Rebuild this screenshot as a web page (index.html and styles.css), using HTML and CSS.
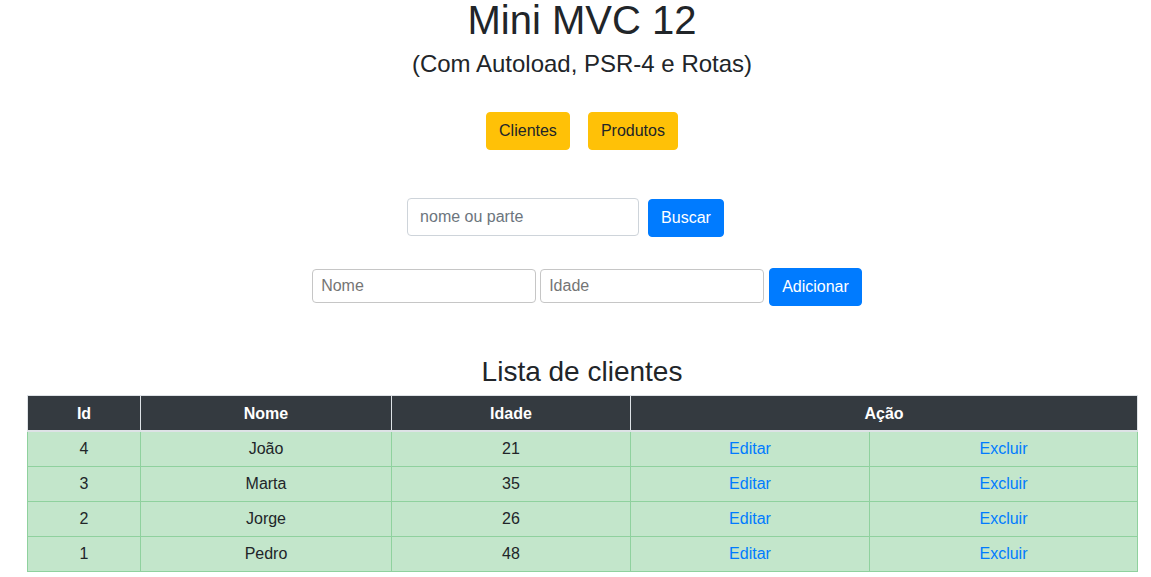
FILE: index.html
```html
<!DOCTYPE html>
<html lang="pt-BR">
<head>
<meta charset="utf-8">
<title>Mini MVC 12</title>
<link rel="stylesheet" href="styles.css">
</head>
<body>
<div class="page">
  <h1 class="title">Mini MVC 12</h1>
  <h4 class="subtitle">(Com Autoload, PSR-4 e Rotas)</h4>
  <nav class="nav">
    <a class="btn btn-warning" href="#">Clientes</a>
    <a class="btn btn-warning" href="#">Produtos</a>
  </nav>
  <form class="search-row">
    <input class="form-control search-input" type="text" placeholder="nome ou parte">
    <button class="btn btn-primary" type="button">Buscar</button>
  </form>
  <form class="add-row">
    <input class="plain-input" type="text" placeholder="Nome">
    <input class="plain-input" type="text" placeholder="Idade">
    <button class="btn btn-primary btn-add" type="button">Adicionar</button>
  </form>
  <h3 class="list-title">Lista de clientes</h3>
  <table class="table">
    <colgroup>
      <col class="c-id"><col class="c-nome"><col class="c-idade"><col class="c-edit"><col class="c-del">
    </colgroup>
    <thead>
      <tr><th>Id</th><th>Nome</th><th>Idade</th><th colspan="2">Ação</th></tr>
    </thead>
    <tbody>
      <tr><td>4</td><td>João</td><td>21</td><td><a href="#">Editar</a></td><td><a href="#">Excluir</a></td></tr>
      <tr><td>3</td><td>Marta</td><td>35</td><td><a href="#">Editar</a></td><td><a href="#">Excluir</a></td></tr>
      <tr><td>2</td><td>Jorge</td><td>26</td><td><a href="#">Editar</a></td><td><a href="#">Excluir</a></td></tr>
      <tr><td>1</td><td>Pedro</td><td>48</td><td><a href="#">Editar</a></td><td><a href="#">Excluir</a></td></tr>
    </tbody>
  </table>
</div>
</body>
</html>
```
FILE: styles.css
```css
* { box-sizing: border-box; }
html, body { margin: 0; padding: 0; background: #fff; }
body {
  font-family: "Liberation Sans", Arial, sans-serif;
  font-size: 16px;
  line-height: 1.5;
  color: #212529;
}
.page {
  width: 1110px;
  margin-left: 27px;
  text-align: center;
}
.title {
  margin: 0 0 10px;
  font-size: 40px;
  line-height: 40px;
  font-weight: 400;
}
.subtitle {
  margin: 0;
  font-size: 24px;
  line-height: 28.8px;
  font-weight: 400;
}
.nav {
  display: flex;
  justify-content: center;
  gap: 18px;
  margin-top: 33px;
}
.btn {
  display: inline-block;
  font-family: inherit;
  font-size: 16px;
  line-height: 24px;
  padding: 6px 12px;
  border: 1px solid transparent;
  border-radius: 4px;
  text-decoration: none;
  cursor: pointer;
}
.btn-warning { background: #ffc107; border-color: #ffc107; color: #212529; }
.btn-primary { background: #007bff; border-color: #007bff; color: #fff; }
.search-row {
  display: flex;
  justify-content: center;
  align-items: flex-start;
  gap: 9px;
  margin: 48px 0 0;
  padding-right: 33px;
}
.search-row .btn { margin-top: 1px; }
.form-control {
  font-family: inherit;
  font-size: 16px;
  line-height: 24px;
  height: 38px;
  padding: 6px 12px;
  border: 1px solid #ced4da;
  border-radius: 4px;
  color: #495057;
  background: #fff;
}
.form-control::placeholder { color: #6c757d; }
.search-input { width: 232px; }
.add-row {
  display: flex;
  justify-content: center;
  align-items: flex-start;
  gap: 4px;
  margin-top: 31px;
  padding-left: 10px;
}
.plain-input {
  width: 224px;
  height: 34px;
  margin-top: 1px;
  font-family: inherit;
  font-size: 16px;
  padding: 4px 8px;
  border: 1px solid #c6c6c6;
  border-radius: 4px;
  background: #fff;
}
.plain-input::placeholder { color: #757575; }
.btn-add { margin-left: 1px; }
.list-title {
  margin: 49px 0 7px;
  font-size: 28px;
  line-height: 33.6px;
  font-weight: 400;
}
.table {
  width: 1110px;
  border-collapse: collapse;
  table-layout: fixed;
}
.c-id { width: 113px; }
.c-nome { width: 251px; }
.c-idade { width: 239px; }
.c-edit { width: 239px; }
.c-del { width: 268px; }
.table th {
  background: #343a40;
  color: #fff;
  font-weight: 700;
  padding: 6px 5px 4px;
  line-height: 24px;
  border: 1px solid #dee2e6;
  border-bottom-width: 2px;
}
.table td {
  background: #c3e6cb;
  padding: 5px;
  line-height: 24px;
  height: 35px;
  border: 1px solid #8fd19e;
}
.table a { color: #007bff; text-decoration: none; }
```
